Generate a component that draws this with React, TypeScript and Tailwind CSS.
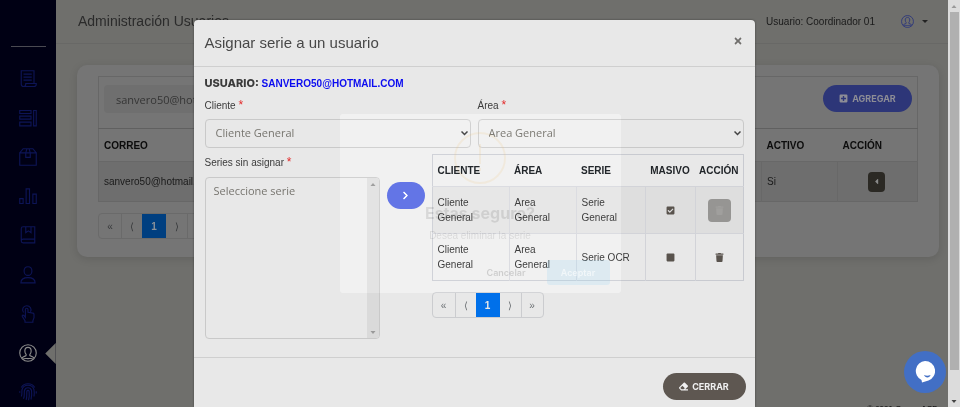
import React from 'react';
import { FaChevronRight, FaCheckSquare, FaSquare, FaTrash, FaEraser, FaPlusSquare, FaTimes, FaCaretLeft } from 'react-icons/fa';

const sans = "font-['Liberation_Sans',Arial,sans-serif]";
const round = "font-['Open_Sans',sans-serif]";
const wide = "font-['Inter',sans-serif]";

function UserCircle() {
  return (
    <>
      <circle cx="12" cy="12" r="11" />
      <path d="M9.500 15.500v-1.700C8.400 12.600 7.800 11 7.800 9.200 7.800 6.500 9.200 4.500 12 4.500s4.200 2 4.200 4.700c0 1.800-.6 3.400-1.700 4.600v1.700l4 1.700c.8.4 1.200 1 1.400 1.900M9.500 15.500l-4 1.700c-.8.4-1.200 1-1.400 1.900" />
      <path d="M5 20.500c2-2 4.500-1 7-1s5-1 7 1" />
    </>
  );
}

const menu = [
  { label: 'Documentos', art: <path d="M3 19V1h17v17M3 19c0 2 1 3 3 3h14c2 0 3-1 3-3v-1H9v1c0 2-1 3-3 3M6 5.500h11M6 9.500h11M6 13.500h11" /> },
  { label: 'Inventario', art: <path d="M1 2h15v4H1zM1 9.500h15v4H1zM1 17.500h15v5H1zM19.500 2H23v20.500h-3.500z" /> },
  { label: 'Paquetes', art: <path d="M1 6.500h22V23H1zM1 6.500L5.500 1h13L23 6.500M9 6.500L10.500 1M15 6.500L13.500 1M9 6.500v6h6v-6" /> },
  { label: 'Estadísticas', art: <path d="M1 15.500h4.500V22H1zM9.500 2.500H14V22H9.500zM18.500 9.500H23V22h-4.500z" /> },
  { label: 'Series', art: <path d="M5.500 1H21v21.500H5.500C4 22.500 3 21.500 3 20V3.500C3 2 4 1 5.500 1zM3 20c0-1.500 1-2.500 2.500-2.500H21M9 1v8l3.500-2.500L16 9V1" /> },
  { label: 'Personas', art: <path d="M12 1c-3.200 0-5.200 2.300-5.200 5.500S9 12.500 12 12.500s5.200-2.800 5.200-6S15.200 1 12 1zM2.500 22.500C2.500 18 6 15.500 12 15.500s9.500 2.500 9.500 7z" /> },
  { label: 'Permisos', art: <path d="M8.500 16.500L6.500 14c-1.300-1.300-2.800 0-2 1.500l3.500 5.500v2h10.500v-2l1.500-4v-4.500c0-1.500-1.500-2-3-2l-5-.8V6c0-2.300-3.500-2.300-3.500 0zM6 10C3.200 6 5.500 1 10.300 1c4.700 0 7 4.500 5 8" /> },
  { label: 'Usuarios', art: <UserCircle />, active: true },
  { label: 'Huella', art: <path d="M1 13v-2M3 18c1.500-3 .5-6 1-9 1-4 4.500-6 8-6s7 2 8 6c.5 3 .5 6 0 9M3 6c2-3.500 5.500-5 9-5s7 1.500 9 5M23 11v3M6 21c2-4 .5-8 1.300-11 .7-2.500 2.700-3.700 4.700-3.700s4 1.200 4.700 3.700c.5 4 .3 8-.7 12M9.500 22.500c1.500-4 .5-8 1-11.500.5-1.500 2.500-1.500 3 0 .5 4 .3 8-.8 12" /> },
];

function Sidebar() {
  return (
    <nav className="w-[56px] shrink-0 bg-[#000014] pt-[46px]">
      <hr className="mx-auto w-[35px] border-[#4a4a52]" />
      <div className="mt-3 grid h-[353px] grid-rows-9">
        {menu.map((m) => (
          <a key={m.label} href="#" aria-label={m.label} className={`relative flex items-center justify-center ${m.active ? 'text-[#8b8b8b]' : 'text-[#0d1456]'}`}>
            <svg viewBox="0 0 24 24" className="size-[18px]" fill="none" stroke="currentColor" strokeWidth="1.500">{m.art}</svg>
            {m.active && (
              <svg viewBox="0 0 11 22" className="absolute right-0 h-[21px] w-[11px]" fill="#6f6f6c"><path d="M11 0v22L0 11z" /></svg>
            )}
          </a>
        ))}
      </div>
    </nav>
  );
}

function Pager({ dark }: { dark?: boolean }) {
  const line = dark ? 'border-[#6a6a6a] text-[#37393b]' : 'border-[#cbcccf] text-[#6b6f73]';
  const on = dark ? 'bg-[#003f80] text-[#8a9199]' : 'bg-[#0070ea] text-[#e8e8e8]';
  return (
    <nav aria-label="Paginación" className={`flex w-fit overflow-hidden rounded border ${line} text-[10px]`}>
      <button className="h-6 w-[22px]">«</button>
      <button className={`h-6 w-[21px] border-l ${line}`}>⟨</button>
      <button className={`h-6 w-6 font-bold ${on}`}>1</button>
      <button className="h-6 w-[21px]">⟩</button>
      <button className={`h-6 w-[22px] border-l ${line}`}>»</button>
    </nav>
  );
}

function Page() {
  return (
    <main className="flex min-w-0 flex-1 flex-col bg-[#6f6f6c] text-[10px] text-[#1a1a1a]">
      <header className="flex h-11 shrink-0 items-center justify-between border-b border-[#686866] pl-[22px] pr-5">
        <h1 className="text-[14px] text-[#2b2b2b]">Administración Usuarios</h1>
        <div className="flex items-center">
          <span>Usuario: Coordinador 01</span>
          <button aria-label="Cuenta" className="ml-[26px] flex items-center gap-2 text-[#2b357c]">
            <svg viewBox="0 0 24 24" className="size-[13px]" fill="none" stroke="currentColor" strokeWidth="1.600"><UserCircle /></svg>
            <svg viewBox="0 0 6 3" className="h-[3px] w-[6px]" fill="#222"><path d="M0 0h6L3 3z" /></svg>
          </button>
        </div>
      </header>
      <section className="ml-[21px] mr-[9px] mt-[21px] shrink-0 rounded-[10px] bg-[#757575] px-[21px] pb-[18px] pt-[11px] shadow-[0_2px_8px_rgba(0,0,0,0.12)]">
        <div className="flex h-[52px] items-start justify-between border border-b-0 border-[#676767] px-[5px] pt-2">
          <input aria-label="Buscar correo" defaultValue="sanvero50@hotmail.com" className={`h-7 w-[220px] rounded bg-[#6f6f6f] px-3 text-[11px] text-[#353535] ${round}`} />
          <button className={`flex h-[27px] w-[89px] items-center justify-center gap-1 rounded-full bg-[#2d3678] text-[9px] font-bold text-[#8d8d96] ${wide}`}>
            <FaPlusSquare className="size-[9px]" />AGREGAR
          </button>
        </div>
        <table className="w-full border border-[#676767] text-left">
          <thead>
            <tr className="h-[33px] border-t border-[#606060] text-[#0c0c0c]">
              <th className="pl-[5px]">CORREO</th>
              <th className="w-[76px] pl-[5px]">ACTIVO</th>
              <th className="w-[80px] pl-[5px]">ACCIÓN</th>
            </tr>
          </thead>
          <tbody>
            <tr className="h-10 border-t border-[#686868] bg-[#6e6e6e]">
              <td className="pl-[5px]">sanvero50@hotmail.com</td>
              <td className="border-l border-[#686868] pl-[5px]">Si</td>
              <td className="border-l border-[#686868]">
                <button aria-label="Opciones" className="ml-[30px] flex h-5 w-[17px] items-center justify-center rounded-sm bg-[#2b2924] text-[#8a8a8a]"><FaCaretLeft className="size-[9px]" /></button>
              </td>
            </tr>
          </tbody>
        </table>
        <div className="mt-[11px]"><Pager dark /></div>
      </section>
      <footer className="mt-[146px] shrink-0 pr-[10px] text-right text-[8px] font-bold text-[#1c1c1c]">© 2021 Grupo ASD</footer>
    </main>
  );
}

function Scrollbar() {
  return (
    <div aria-hidden="true" className="flex w-3 shrink-0 flex-col items-center bg-[#dcdcdc]">
      <svg viewBox="0 0 12 12" className="size-3" fill="#999"><path d="M3.500 8h5L6 5z" /></svg>
      <div className="w-[9px] flex-1 bg-[#b0b0b0]" />
      <div className="h-[25px]" />
      <svg viewBox="0 0 12 12" className="size-3" fill="#444"><path d="M3.500 5h5L6 8z" /></svg>
    </div>
  );
}

function Field({ id, label, value }: { id: string; label: string; value: string }) {
  return (
    <div className="min-w-0 flex-1">
      <label htmlFor={id} className="block h-[21px]">{label} <span className="text-[12px] leading-none text-[#e32b2b]">*</span></label>
      <div className="relative">
        <select id={id} className={`h-[29px] w-full appearance-none rounded border border-[#c9c9c9] bg-transparent pl-[10px] text-[11px] text-[#77756f] ${round}`}>
          <option>{value}</option>
        </select>
        <svg viewBox="0 0 7 5" className="pointer-events-none absolute right-[3px] top-3 h-[5px] w-[7px]" fill="none" stroke="#444" strokeWidth="1.500"><path d="M.5.500l3 3 3-3" /></svg>
      </div>
    </div>
  );
}

const series = [
  { serie: 'Serie General', masivo: true },
  { serie: 'Serie OCR', masivo: false },
];

function AssignDialog() {
  return (
    <div role="dialog" aria-label="Asignar serie a un usuario" className="flex w-[561px] flex-col rounded-t bg-[#e8e8e8] text-[10px] text-[#3b3b3b] shadow-[0_0_2px_rgba(0,0,0,0.5)]">
      <header className="flex h-[47px] items-center justify-between border-b border-[#cfcfcf] px-[11px]">
        <h2 className="text-[15px] text-[#484848]">Asignar serie a un usuario</h2>
        <button aria-label="Cerrar ventana" className="pb-1 pr-px text-[#706e6c]"><FaTimes className="size-[10px]" /></button>
      </header>
      <div className="px-[11px] pb-[18px] pt-2">
        <p className="h-[23px] font-bold leading-[16px] text-[#0b0bf0]"><span className={`text-[11px] font-extrabold text-[#3b3b3b] ${wide}`}>USUARIO:</span> SANVERO50@HOTMAIL.COM</p>
        <div className="flex gap-[7px]">
          <Field id="cliente" label="Cliente" value="Cliente General" />
          <Field id="area" label="Área" value="Area General" />
        </div>
        <div className="mt-[6px] flex items-start">
          <div className="w-[175px]">
            <label htmlFor="series" className="block h-[23px] pt-px">Series sin asignar <span className="text-[12px] leading-none text-[#e32b2b]">*</span></label>
            <div className="flex h-[162px] overflow-hidden rounded border border-[#c9c9c9]">
              <select id="series" size={8} className={`min-w-0 flex-1 overflow-hidden bg-transparent px-2 pt-[5px] text-[11px] text-[#77756f] ${round}`}>
                <option>Seleccione serie</option>
              </select>
              <div aria-hidden="true" className="flex w-3 flex-col items-center justify-between bg-[#dadada]">
                <svg viewBox="0 0 12 12" className="size-3" fill="#999"><path d="M3.500 8h5L6 5z" /></svg>
                <svg viewBox="0 0 12 12" className="size-3" fill="#999"><path d="M3.500 5h5L6 8z" /></svg>
              </div>
            </div>
          </div>
          <button aria-label="Asignar" className="ml-[7px] mt-7 flex h-[27px] w-[38px] items-center justify-center rounded-full bg-[#5f70dd] text-white"><FaChevronRight className="size-[9px]" /></button>
          <div className="ml-[7px] min-w-0 flex-1">
            <table className="w-full table-fixed border border-[#c8cad0] text-left leading-[15px]">
              <colgroup>
                <col className="w-[77px]" /><col className="w-[67px]" /><col className="w-[69px]" /><col className="w-[50px]" /><col />
              </colgroup>
              <thead>
                <tr className="h-8 text-[#212529]">
                  <th className="pl-[5px]">CLIENTE</th>
                  <th className="pl-[5px]">ÁREA</th>
                  <th className="pl-[5px]">SERIE</th>
                  <th className="text-center">MASIVO</th>
                  <th className="text-center">ACCIÓN</th>
                </tr>
              </thead>
              <tbody>
                {series.map((s) => (
                  <tr key={s.serie} className="h-[47px] border-t border-[#d2d3d8] odd:bg-[#dedede]">
                    <td className="pl-[5px] pr-5">Cliente General</td>
                    <td className="border-l border-[#d2d3d8] pl-[5px] pr-5">Area General</td>
                    <td className="border-l border-[#d2d3d8] pl-[5px] pr-3">{s.serie}</td>
                    <td className="border-l border-[#d2d3d8]">
                      <button aria-label="Masivo" className="mx-auto block text-[#59534d]">{s.masivo ? <FaCheckSquare className="size-[9px]" /> : <FaSquare className="size-[9px]" />}</button>
                    </td>
                    <td className="border-l border-[#d2d3d8]">
                      <button aria-label="Eliminar" className={`mx-auto flex h-[23px] w-[23px] items-center justify-center rounded-sm ${s.masivo ? 'bg-[#969593] text-[#a09f9d]' : 'text-[#59534d]'}`}><FaTrash className="size-[9px]" /></button>
                    </td>
                  </tr>
                ))}
              </tbody>
            </table>
            <div className="mt-[11px]"><Pager /></div>
          </div>
        </div>
      </div>
      <footer className="flex flex-1 items-start justify-end border-t border-[#cfcfcf] px-[9px] pt-[15px]">
        <button className={`flex h-[27px] w-[83px] items-center justify-center gap-1 rounded-full bg-[#5e5751] text-[9px] font-bold text-[#f0f0f0] ${wide}`}>
          <FaEraser className="size-[9px]" />CERRAR
        </button>
      </footer>
    </div>
  );
}

function ConfirmAlert() {
  return (
    <>
      <div className="absolute inset-x-0 top-[114px] mx-auto h-[179px] w-[281px] rounded-[3px] bg-[#0a0a0a] mix-blend-color-dodge" />
      <div role="alertdialog" aria-label="Estas seguro?" className={`absolute inset-x-0 top-[114px] mx-auto flex h-[179px] w-[281px] flex-col items-center pt-[18px] ${wide}`}>
        <svg viewBox="0 0 52 52" className="size-[52px] opacity-15" fill="none" stroke="#f0c070" strokeWidth="2"><circle cx="26" cy="26" r="25" /><path d="M26 12v20M26 36v3" /></svg>
        <h3 className="mt-[18px] text-[16px] font-bold leading-[22px] text-black/10">Estas seguro?</h3>
        <p className={`mt-1 text-[10px] leading-[16px] text-black/10 ${sans}`}>Desea eliminar la serie</p>
        <div className="mt-4 flex gap-2 self-end pr-[11px] text-[9px] font-semibold">
          <button className="h-[25px] w-[65px] rounded-[3px] text-black/15">Cancelar</button>
          <button className="h-[25px] w-[63px] rounded-[3px] bg-[#8fd3f4]/20 text-white/60">Aceptar</button>
        </div>
      </div>
    </>
  );
}

export default function App() {
  return (
    <div className={`relative flex h-screen overflow-hidden ${sans}`}>
      <Sidebar />
      <Page />
      <Scrollbar />
      <div className="absolute inset-y-0 left-0 right-3 flex justify-center pt-5">
        <AssignDialog />
      </div>
      <ConfirmAlert />
      <button aria-label="Abrir chat" className="absolute bottom-[14px] right-[14px] flex size-[42px] items-center justify-center rounded-full bg-[#426fc5]">
        <svg viewBox="0 0 20 22" className="h-[22px] w-5"><path d="M10 0a10 10 0 0 1 3.500 19.400L7 21.500l-.5-2.500A10 10 0 0 1 10 0z" fill="#fff" /><path d="M9 14c2 1 4.500 1 6.500 0-.5 3.200-5.500 3.200-6.500 0z" fill="#426fc5" /></svg>
      </button>
    </div>
  );
}
